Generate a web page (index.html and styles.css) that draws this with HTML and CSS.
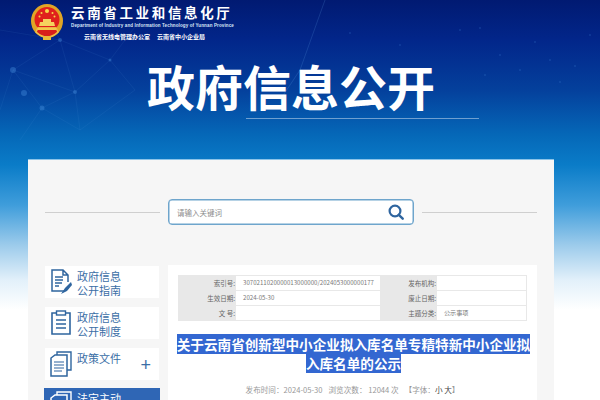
FILE: index.html
```html
<!DOCTYPE html>
<html lang="zh">
<head>
<meta charset="utf-8">
<title>政府信息公开</title>
<link rel="stylesheet" href="styles.css">
</head>
<body>
<svg class="net" width="600" height="160" viewBox="0 0 600 160" aria-hidden="true">
  <g stroke="#5f9fe0" stroke-opacity=".16" stroke-width=".6" fill="none">
    <path d="M13 70 L60 40 L75 92 L13 70 L42 108 L75 92 L110 60 L60 40 M42 108 L20 140 M42 108 L80 130 L75 92 M110 60 L140 20 M110 60 L135 90 L80 130 M0 30 L60 40 L40 0 M13 70 L0 110"/>
    <path d="M300 70 L325 0 M300 70 L280 100" stroke-opacity=".35"/>
  </g>
  <g fill="#4f9be8" fill-opacity=".35">
    <circle cx="13" cy="70" r="3"/><circle cx="24" cy="93" r="3"/><circle cx="42" cy="108" r="2.500"/><circle cx="60" cy="40" r="2"/><circle cx="75" cy="92" r="2"/><circle cx="110" cy="60" r="1.500"/>
    <circle cx="460" cy="30" r=".8"/><circle cx="480" cy="28" r=".8"/><circle cx="500" cy="55" r=".8"/><circle cx="520" cy="70" r=".8"/><circle cx="535" cy="42" r=".8"/><circle cx="550" cy="60" r=".8"/><circle cx="575" cy="66" r=".8"/><circle cx="590" cy="35" r=".8"/><circle cx="400" cy="45" r=".8"/><circle cx="350" cy="33" r=".8"/><circle cx="485" cy="75" r=".8"/><circle cx="560" cy="82" r=".8"/>
  </g>
</svg>
<div class="page">
  <header class="brand">
    <svg class="emblem" width="32" height="37" viewBox="0 0 32 37" aria-hidden="true">
      <ellipse cx="16" cy="17" rx="16" ry="17" fill="#e0a526"/>
      <circle cx="16" cy="15.500" r="12.500" fill="#e0201c"/>
      <path d="M5 28 Q16 38 27 28 L25 24 L7 24 Z" fill="#d81e1a" stroke="#eec04a" stroke-width="1.500"/>
      <path d="M7 23.500 H25 V26 H7 Z" fill="#f2c94c"/>
      <path d="M9 18 H23 L24 22 H8 Z M12 15 H20 V18 H12 Z" fill="#f5d35f"/>
      <g fill="#f7d64a"><circle cx="16" cy="7" r="2"/><circle cx="10.500" cy="9" r="1"/><circle cx="21.500" cy="9" r="1"/><circle cx="8.500" cy="12.500" r="1"/><circle cx="23.500" cy="12.500" r="1"/></g>
      <path d="M12 32 H20 V36 H12 Z" fill="#e8b93a"/>
    </svg>
    <div class="brand-text">
      <div class="brand-name">云南省工业和信息化厅</div>
      <div class="brand-en">Department of Industry and Information Technology of Yunnan Province</div>
      <div class="brand-sub"><span>云南省无线电管理办公室</span><span>云南省中小企业局</span></div>
    </div>
  </header>
  <h1 class="hero-title">政府信息公开</h1>
  <div class="hero-rule"></div>

  <main class="card">
    <div class="search-row">
      <div class="search-line"></div>
      <div class="search-box">
        <span class="placeholder">请输入关键词</span>
        <svg class="search-icon" width="16" height="16" viewBox="0 0 16 16" aria-hidden="true">
          <circle cx="7" cy="7" r="5.400" fill="none" stroke="#2f659f" stroke-width="2.200"/>
          <path d="M10.800 10.800 L14.700 14.700" stroke="#2f659f" stroke-width="2.400" stroke-linecap="round"/>
        </svg>
      </div>
      <div class="search-line"></div>
    </div>

    <div class="columns">
      <nav class="side">
        <a class="side-item">
          <svg width="22" height="26" viewBox="0 0 22 26" aria-hidden="true" class="side-icon">
            <path d="M15 22 H2 V1 H13 L18 6 V13 M13 1 V6 H18" fill="none" stroke="#2f659f" stroke-width="1.500"/>
            <path d="M5 8 H13 M5 11 H13 M5 14 H12 M5 17 H9" stroke="#2f659f" stroke-width="1.300"/>
            <path d="M21 13 L15 19 L11 25 L17 22 L22 16 Z" fill="#2f659f"/>
          </svg>
          <span>政府信息<br>公开指南</span>
        </a>
        <a class="side-item">
          <svg width="22" height="26" viewBox="0 0 22 26" aria-hidden="true" class="side-icon">
            <path d="M6 3 H2 V24 H20 V3 H16" fill="none" stroke="#2f659f" stroke-width="1.600"/>
            <rect x="6.500" y="1" width="9" height="4" fill="none" stroke="#2f659f" stroke-width="1.400"/>
            <path d="M6 10 H16 M6 14 H16 M6 18 H16" stroke="#2f659f" stroke-width="1.400"/>
          </svg>
          <span>政府信息<br>公开制度</span>
        </a>
        <a class="side-item">
          <svg width="22" height="26" viewBox="0 0 22 26" aria-hidden="true" class="side-icon">
            <path d="M7 4 V1 H21 V19 H17" fill="none" stroke="#2f659f" stroke-width="1.400"/>
            <path d="M1 7 L5 4 H17 V25 H1 Z" fill="none" stroke="#2f659f" stroke-width="1.500"/>
            <path d="M4 11 H14 M4 14 H14 M4 17 H14 M4 20 H12" stroke="#2f659f" stroke-width="1.200"/>
          </svg>
          <span class="side-label">政策文件</span>
          <span class="plus">+</span>
        </a>
        <a class="side-item active">
          <svg width="22" height="26" viewBox="0 0 22 26" aria-hidden="true" class="side-icon">
            <path d="M7 4 V1 H21 V19 H17" fill="none" stroke="#fff" stroke-width="1.400"/>
            <path d="M1 7 L5 4 H17 V25 H1 Z" fill="none" stroke="#fff" stroke-width="1.500"/>
          </svg>
          <span>法定主动<br>公开内容</span>
        </a>
      </nav>

      <section class="content">
        <div class="meta-table">
          <div class="cell label">索引号:</div><div class="cell value">3070211020000013000000/2024053000000177</div><div class="cell label">发布机构:</div><div class="cell value"></div>
          <div class="cell label">生效日期:</div><div class="cell value">2024-05-30</div><div class="cell label">废止日期:</div><div class="cell value"></div>
          <div class="cell label">文 号:</div><div class="cell value"></div><div class="cell label">主题分类:</div><div class="cell value">公示事项</div>
        </div>
        <h2 class="doc-title"><span>关于云南省创新型中小企业拟入库名单专精特新中小企业拟入库名单的公示</span></h2>
        <p class="doc-meta"><span>发布时间：2024-05-30</span><span>浏览次数： 12044 次</span><span>【字体：<b>小 大</b>】</span></p>
      </section>
    </div>
  </main>
</div>
</body>
</html>
```
FILE: styles.css
```css
* { box-sizing: border-box; margin: 0; padding: 0; }
html, body { height: 400px; overflow: hidden; }
body {
  position: relative;
  font-family: "Noto Sans CJK SC", "Liberation Sans", sans-serif;
  background: linear-gradient(180deg, #011a72 0, #02268a 40px, #04409c 90px, #0568b8 135px, #0a7cc8 165px, #3f9ddb 205px, #9ccbeb 245px, #e2f0fa 280px, #ffffff 310px);
}
.net { position: absolute; left: 0; top: 0; }
.page { position: relative; }

.brand { display: flex; align-items: flex-start; gap: 8px; padding: 4px 0 0 31px; height: 60px; }
.emblem { flex: none; }
.brand-text { color: #fff; }
.brand-name { font-size: 13.500px; font-weight: 700; letter-spacing: 2.650px; line-height: 16px; }
.brand-en { font-size: 4.500px; line-height: 7px; margin-top: 2px; white-space: nowrap; letter-spacing: .13px; color: #d9e6f7; font-family: "Liberation Sans", sans-serif; font-weight: 700; }
.brand-sub { display: flex; gap: 7px; font-size: 6px; line-height: 8px; margin: 4px 0 0 13px; font-weight: 700; }

.hero-title { font-size: 48px; line-height: 50px; font-weight: 700; color: #fff; margin-left: 147px; height: 58px; }
.hero-rule { width: 233px; height: 1px; margin-left: 246px; background: #6f9fd0; }

.card { width: 526px; margin: 40px 0 0 28px; height: 300px; background: #f6f6f6; border-top: 1px solid #8cc4e8; padding: 39px 17px 0 17px; }

.search-row { display: flex; align-items: center; gap: 7px; height: 26px; }
.search-line { flex: 1; height: 1px; background: #cfcfcf; }
.search-box { flex: none; width: 246px; height: 26px; margin: 0 1px; display: flex; align-items: center; justify-content: space-between; padding: 0 9px 0 8px; background: #fff; border: 1px solid #6ea5cc; border-radius: 4px; box-shadow: inset 0 0 0 .5px #6ea5cc; }
.placeholder { font-size: 7.500px; color: #8c8c8c; }
.search-icon { display: block; }

.columns { display: flex; gap: 9px; margin-top: 40px; }
.side { width: 114px; display: flex; flex-direction: column; gap: 9px; flex: none; margin-top: 1px; }
.side-item { display: flex; height: 32px; background: #fff; color: #3b6ea6; align-items: flex-start; font-size: 11px; line-height: 14px; padding: 3px 0 0 5px; position: relative; }
.side-icon { flex: none; margin-right: 5px; }
.plus { position: absolute; right: 8px; top: 5px; font-size: 18px; line-height: 24px; color: #3b6ea6; font-family: "Liberation Sans", sans-serif; }
.active { background: #2f66b5; color: #fff; height: 40px; margin: -1px -1px 0 -1px; padding-left: 6px; }

.content { width: 369px; height: 140px; background: #fff; padding: 10px; flex: none; }
.meta-table { display: grid; grid-template-columns: 58px 144px 57px 90px; grid-auto-rows: 15px; border: solid #e8e8e8; border-width: 1px 1px 0 0; line-height: 14px; color: #666; }
.cell { border-bottom: 1px solid #e8e8e8; white-space: nowrap; overflow: hidden; }
.label { background: #e8e8e8; text-align: right; padding-right: 1px; font-size: 6.500px; }
.value { padding-left: 7px; color: #777; font-size: 6.100px; }

.doc-title { font-size: 13.600px; line-height: 19px; font-weight: 700; color: #fff; text-align: center; margin: 14px -7px 0 -5px; }
.doc-title span { background: #3367d1; }
.doc-meta { display: flex; justify-content: center; gap: 6px; margin-top: 11px; font-size: 7.600px; line-height: 12px; color: #999; }
.doc-meta b { font-weight: 400; color: #444; }
```
